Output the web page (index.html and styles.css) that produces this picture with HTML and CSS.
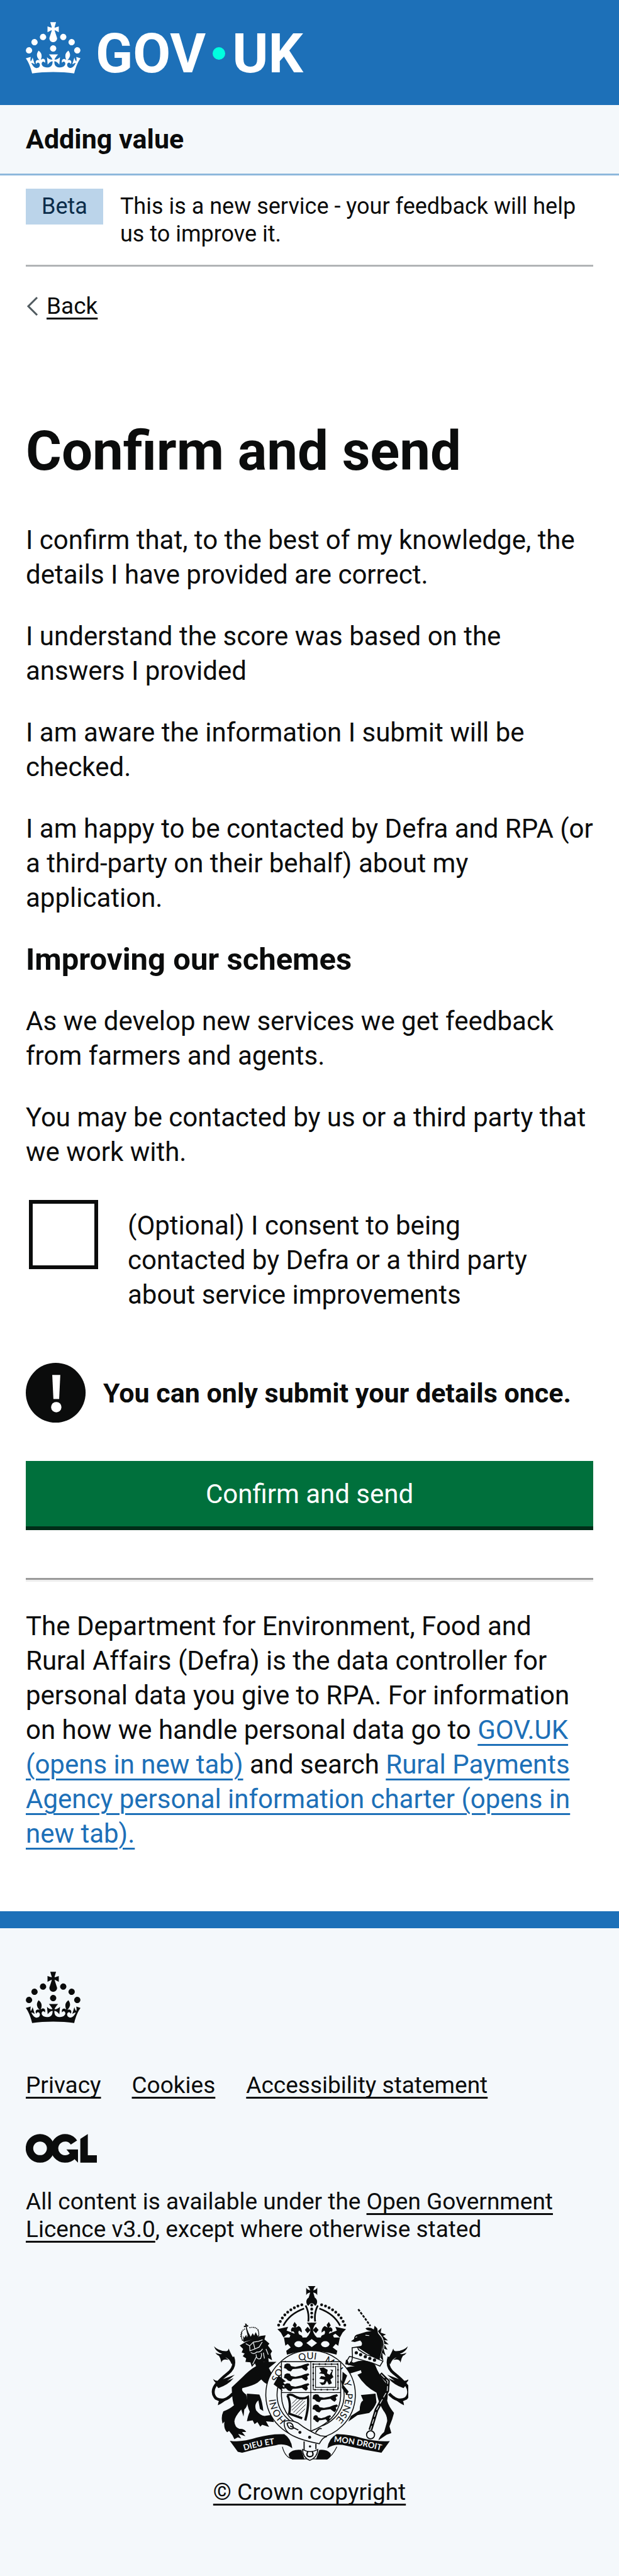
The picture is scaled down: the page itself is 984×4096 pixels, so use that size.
FILE: index.html
```html
<!DOCTYPE html>
<html lang="en">
<head>
<meta charset="utf-8">
<title>Confirm and send - Adding value</title>
<meta name="viewport" content="width=device-width, initial-scale=1">
<link rel="stylesheet" href="styles.css">
</head>
<body>
<svg class="defs" aria-hidden="true">
  <symbol id="crown" viewBox="0 0 32 30">
    <path fill-rule="evenodd" d="M22.6 10.4c-1 .4-2-.1-2.4-1-.4-.9.1-2 1-2.4.9-.4 2 .1 2.4 1s-.1 2-1 2.4m-5.9 6.7c-.9.4-2-.1-2.4-1-.4-.9.1-2 1-2.4.9-.4 2 .1 2.4 1s-.1 2-1 2.4m10.8-3.7c-1 .4-2-.1-2.4-1-.4-.9.1-2 1-2.4.9-.4 2 .1 2.4 1s0 2-1 2.4m3.3 4.8c-1 .4-2-.1-2.4-1-.4-.9.1-2 1-2.4.9-.4 2 .1 2.4 1s-.1 2-1 2.4M17 4.7l2.3 1.2V2.5l-2.3.7-.2-.2.9-3h-3.4l.9 3-.2.2c-.1.1-2.3-.7-2.3-.7v3.4L15 4.7c.1.1.1.2.2.2l-1.3 4c-.1.2-.1.4-.1.6 0 1.1.8 2 1.9 2.2h.7c1-.2 1.9-1.1 1.9-2.1 0-.2 0-.4-.1-.6l-1.3-4c-.1-.2 0-.2.1-.3m-7.6 5.7c.9.4 2-.1 2.4-1 .4-.9-.1-2-1-2.4-.9-.4-2 .1-2.4 1s0 2 1 2.4m-5 3c.9.4 2-.1 2.4-1 .4-.9-.1-2-1-2.4-.9-.4-2 .1-2.4 1s.1 2 1 2.4m-3.2 4.8c.9.4 2-.1 2.4-1 .4-.9-.1-2-1-2.4-.9-.4-2 .1-2.4 1s0 2 1 2.4m14.8 11c4.4 0 8.6.3 12.3.8 1.1-4.5 2.4-7 3.7-8.8l-2.5-.9c.2 1.3.3 1.9 0 2.7-.4-.4-.8-1.1-1.1-2.3l-1.2 4c.7-.5 1.3-.8 2-.9-1.1 2.5-2.6 3.1-3.5 3-1.1-.2-1.7-1.2-1.5-2.1.3-1.2 1.5-1.5 2.1-.1 1.1-2.3-.8-3-2-2.3 1.9-1.9 2.1-3.5.6-5.6-2.1 1.6-2.1 3.2-1.2 5.5-1.2-1.4-3.2-.6-2.5 1.6.9-1.4 2.1-.5 1.9.8-.2 1.1-1.7 2.1-3.5 1.9-2.7-.2-2.9-2.1-2.9-3.6.7-.1 1.9.5 2.9 1.9l.4-4.3c-1.1 1.1-2.1 1.4-3.2 1.4.4-1.2 2.1-3 2.1-3h-5.4s1.7 1.9 2.1 3c-1.1 0-2.1-.2-3.2-1.4l.4 4.3c1-1.4 2.2-2 2.9-1.9-.1 1.5-.2 3.4-2.9 3.6-1.9.2-3.4-.8-3.5-1.9-.2-1.3 1-2.2 1.9-.8.7-2.3-1.2-3-2.5-1.6.9-2.2.9-3.9-1.2-5.5-1.5 2-1.3 3.7.6 5.6-1.2-.7-3.1 0-2 2.3.6-1.4 1.8-1.1 2.1.1.2.9-.3 1.9-1.5 2.1-.9.2-2.4-.5-3.5-3 .6 0 1.2.3 2 .9l-1.2-4c-.3 1.1-.7 1.9-1.1 2.3-.3-.8-.2-1.4 0-2.7l-2.9.9C1.3 23 2.6 25.5 3.7 30c3.7-.5 7.9-.8 12.3-.8"/>
  </symbol>
</svg>

<header class="header">
  <a class="brand" href="#" aria-label="GOV.UK">
    <svg class="crown" aria-hidden="true"><use href="#crown"/></svg>
    <span class="wordmark">GOV<span class="dot"></span>UK</span>
  </a>
</header>
<div class="service">
  <a class="service-name" href="#">Adding value</a>
</div>

<div class="container">
  <div class="phase">
    <strong class="tag">Beta</strong>
    <span class="phase-text">This is a new service - your feedback will help us to improve it.</span>
  </div>
  <a class="back" href="#">
    <svg class="chevron" viewBox="0 0 20 32" aria-hidden="true"><path d="M18 2 4 16l14 14"/></svg>
    <span class="back-text">Back</span>
  </a>

  <main class="main">
    <h1>Confirm and send</h1>
    <p>I confirm that, to the best of my knowledge, the details I have provided are correct.</p>
    <p>I understand the score was based on the answers I provided</p>
    <p>I am aware the information I submit will be checked.</p>
    <p>I am happy to be contacted by Defra and RPA (or a third-party on their behalf) about my application.</p>
    <h2>Improving our schemes</h2>
    <p>As we develop new services we get feedback from farmers and agents.</p>
    <p>You may be contacted by us or a third party that we work with.</p>
    <form class="form">
      <div class="consent">
        <input type="checkbox" id="consent" class="consent-box">
        <label for="consent" class="consent-label">(Optional) I consent to being contacted by Defra or a third party about service improvements</label>
      </div>
      <div class="warning">
        <svg class="warning-icon" viewBox="0 0 105 105" aria-hidden="true">
          <circle class="ink" cx="52" cy="52" r="52"/>
          <path class="paper" d="M46 21h14l-2 42H48z"/>
          <circle class="paper" cx="53" cy="77" r="9"/>
        </svg>
        <strong>You can only submit your details once.</strong>
      </div>
      <button class="submit" type="button">Confirm and send</button>
    </form>
    <hr>
    <p>The Department for Environment, Food and Rural Affairs (Defra) is the data controller for personal data you give to RPA. For information on how we handle personal data go to <a href="#">GOV.UK (opens in new tab)</a> and search <a href="#">Rural Payments Agency personal information charter (opens in new tab).</a></p>
  </main>
</div>

<footer class="footer">
  <svg class="crown" aria-hidden="true"><use href="#crown"/></svg>
  <nav class="footer-links">
    <a href="#">Privacy</a>
    <a href="#">Cookies</a>
    <a href="#">Accessibility statement</a>
  </nav>
  <svg class="ogl" viewBox="27 42 369 150" role="img" aria-label="Open Government Licence">
    <circle class="ring" cx="101" cy="117" r="55"/>
    <path class="ring" d="M277 87A55 55 0 1 0 270 156"/>
    <path class="ink" d="M238 123h60v68l-17-17-26-31zM310 68l39-25v110h47v38h-86z"/>
  </svg>
  <p class="licence">All content is available under the <a href="#">Open Government Licence v3.0</a>, except where otherwise stated</p>
  <a class="copyright" href="#">
    <svg class="arms" viewBox="84 90 1032 918" aria-hidden="true">
      <defs>
        <path id="garter" d="M604 846A185 186 0 0 1 604 474A185 186 0 0 1 604 846"/>
        <path id="motto-left" d="M256 954Q360 922 470 914"/>
        <path id="motto-right" d="M726 908Q850 920 1000 960"/>
        <g id="passant">
          <path class="ink" d="M6 8 18 2 32 4 40 16 62 20 92 14 112 6 130 2 136 10 124 18 128 30 118 42 106 34 96 26 70 30 48 32 38 44 24 40 14 30 2 26z"/>
          <path class="cut" d="M44 10Q72 2 96 8M54 38 72 42M88 36 100 42"/>
        </g>
        <g id="tail">
          <path class="line" stroke-width="15" d="M196 655Q150 705 108 680Q80 650 104 612Q130 580 168 550Q214 516 196 462"/>
          <path class="ink" d="M97 406Q120 430 160 432Q172 432 174 418Q182 440 206 482L190 500Q178 468 152 462Q118 462 104 440Q124 450 140 446Q106 434 97 406zM120 450Q150 455 174 478Q140 470 136 492Q132 468 120 450zM92 578Q112 596 140 580L206 556Q170 590 130 606Q104 608 92 578zM100 602Q140 600 200 574Q170 610 120 626zM118 716Q116 690 140 684L178 672Q150 700 118 716z"/>
        </g>
        <g id="flank">
          <path class="ink" d="M612 398Q590 392 568 372Q600 350 604 322L588 338 574 320 588 304 604 320 600 306Q596 294 584 282H612zM558 370Q520 374 476 372Q494 366 498 348L486 340 462 360 448 334 430 316 486 304 478 324 500 332 520 340Q516 322 504 330 496 316 510 306L520 308 510 296 520 278 532 294 526 308 542 300Q560 312 558 334L544 324Q536 332 544 344 570 350 558 370z"/>
        </g>
      </defs>

      <!-- supporters -->
      <use href="#tail"/>
      <use href="#tail" transform="matrix(-1 0 0 1 1212 0)"/>
      <path class="ink" d="M318 510Q280 532 245 570L190 622Q192 690 202 716 176 738 146 748 132 778 142 812L152 802Q146 840 166 858L176 850Q195 870 204 894L222 884 240 890 224 866 262 878 244 856 266 856Q256 838 230 840 206 832 204 800 206 776 240 738L252 775 256 738Q276 720 272 690L266 660Q238 640 246 626 300 614 325 598L345 580Q372 612 410 614L452 640 440 612 468 624 452 602 472 600 446 584 470 578Q430 578 405 558L385 520 425 488H380Q345 480 318 510z"/>
      <path class="ink" d="M270 655 335 660Q350 690 356 746L338 735 330 690Q306 710 318 742 340 770 362 772L400 766 412 804 370 800 386 830 350 818 340 828 325 804 310 815 300 795 270 800Q275 770 285 750 265 710 270 655z"/>
      <path class="ink" d="M232 402 262 384 342 352 368 348 362 370 388 392 380 402 402 432 394 446 402 480 382 468 386 500 366 486 350 490 322 520 312 496 296 514 288 490 262 488 266 470 248 458 258 444 242 438 250 420z"/>
      <path class="cut" d="M264 392 284 404 304 384 330 380 352 372M284 404 286 430 312 420 304 388M312 420 334 410 350 384M290 438Q306 452 322 436 340 440 352 420M318 448Q320 480 342 470 350 450 344 442M300 500 320 460M362 470 356 440M382 450 370 420"/>
      <path class="line" stroke-width="4" d="M246 374Q236 350 244 334M332 356Q334 330 326 318M244 376 330 352"/>
      <path class="dots" stroke-width="6" stroke-dasharray="0 9" d="M238 354Q238 322 262 314M286 308Q316 302 330 322"/>
      <path class="ink" d="M250 350 256 362 266 346 270 360 278 334 290 356 300 338 308 350 316 332 326 352 330 362 252 384zM260 286 270 290 268 296 276 294 276 304 268 302 272 318 284 350 274 352 266 318 264 304 254 306 254 298 262 298z"/>
      <path class="ink" d="M832 368Q832 346 858 342L896 330 924 326Q900 324 892 312 914 302 936 318L940 298 954 312 958 338Q990 370 978 428L966 476 930 462 880 430 846 408 870 404Q880 390 864 376L836 384 816 380z"/>
      <path class="ink" d="M958 326 976 310 972 334 1000 344 984 352 1010 376 990 374 1014 396 990 394 1008 424 986 418 998 456 980 440 986 482 970 466 982 420Q984 370 958 326z"/>
      <path class="cut" d="M964 340Q996 372 988 420M892 348 912 350M840 360 848 356"/>
      <path class="line" stroke-width="9" stroke-dasharray="14 6" d="M854 212Q884 250 918 300"/>
      <path class="paper edge" d="M822 414 850 410 856 424 880 440 900 452 930 460 950 470 984 484 968 510 930 494 880 480 824 464z"/>
      <path class="dots" stroke-width="17" stroke-dasharray="0 26" d="M844 440Q890 462 956 484"/>
      <path class="ink" d="M790 476 830 492Q890 466 942 502 962 556 1000 600 1014 650 1006 692 1014 722 1042 756 1034 790 1018 826L1028 862 1004 870 960 900Q966 876 990 856L1006 800Q1008 770 985 742 960 700 950 650 890 620 850 556L872 546 868 532 800 552Q780 600 776 622L806 648 796 664 764 622Q756 560 774 528 800 510 836 512L786 500z"/>
      <path class="ink" d="M868 662 945 655 950 700Q940 730 912 756L850 768 802 802 816 772 862 742Q862 700 880 690z"/>
      <path class="line" stroke-width="20" d="M970 550 1010 590 1006 640 950 740 918 846"/>
      <path class="cut" stroke-width="11" stroke-dasharray="26 12" d="M974 554 1010 590 1006 640 950 740 918 846"/>
      <circle class="line" stroke-width="6" cx="919" cy="871" r="21"/>
      <path class="paper edge" d="M796 480 808 460 824 462 820 484 804 502z"/>

      <!-- garter -->
      <ellipse class="paper edge" cx="604" cy="660" rx="235" ry="232"/>
      <ellipse class="line" stroke-width="5" cx="604" cy="660" rx="176" ry="174"/>
      <text class="motto"><textPath href="#garter" startOffset="140">HONI</textPath></text>
      <text class="motto"><textPath href="#garter" startOffset="356">SOIT</textPath></text>
      <text class="motto"><textPath href="#garter" startOffset="522">QUI</textPath></text>
      <text class="motto"><textPath href="#garter" startOffset="656">MAL</textPath></text>
      <text class="motto"><textPath href="#garter" startOffset="804">Y</textPath></text>
      <text class="motto"><textPath href="#garter" startOffset="866">PENSE</textPath></text>

      <!-- shield -->
      <path class="paper edge" d="M451 487H762V660Q762 790 605 852 451 790 451 660z"/>
      <path class="line" stroke-width="4" d="M605 487V852M451 649H762"/>
      <use href="#passant" x="462" y="494"/>
      <use href="#passant" x="462" y="546"/>
      <use href="#passant" x="462" y="598"/>
      <use href="#passant" x="612" y="656"/>
      <use href="#passant" x="612" y="710"/>
      <use href="#passant" transform="translate(616 766) scale(.7 .9)"/>
      <path class="line" stroke-width="4" d="M618 500H748V634H618zM630 512H736V622H630z"/>
      <path class="dots" stroke-width="9" stroke-dasharray="0 32" d="M618 500H748V634H618V500"/>
      <path class="ink" d="M650 520 672 518 694 530 690 548 704 556 716 536 706 528 722 530 716 552 724 568 708 580 716 600 700 608 690 588 680 606 664 610 650 596 672 596 678 582 650 576 660 562 682 566 674 552 648 548 660 540z"/>
      <path class="line" stroke-width="12" d="M482 664Q500 654 520 668 560 690 590 672 596 720 576 796M482 664Q502 700 492 760L560 784"/>
      <path class="line" stroke-width="3" d="M508 706 534 680M504 726 550 684M506 742 564 688M514 754 574 694M526 762 578 712M540 768 576 734"/>
      <path class="ink" d="M436 560 474 590 460 596 474 612 456 612 470 630 452 628 458 642 410 606z"/>
      <path class="ink" d="M772 540 796 560 776 610 804 644 794 662 768 624z"/>

      <!-- buckle and strap -->
      <path class="paper edge" d="M466 800Q500 790 540 810 590 850 656 876L690 880Q668 882 650 918 560 900 520 880 460 856 466 800z"/>
      <path class="line" stroke-width="6" d="M480 810Q510 800 514 836 490 850 480 810M496 824 540 846M570 906V950M632 918V946M630 860Q650 830 662 840"/>
      <circle class="ink" cx="548" cy="858" r="8"/><circle class="ink" cx="599" cy="884" r="8"/><circle class="ink" cx="601" cy="932" r="6"/>

      <!-- ribbon -->
      <path class="ink" d="M180 902Q240 912 320 886 400 864 466 868 502 890 508 942 470 912 420 926 340 938 245 965L222 960zM1020 904Q950 908 880 890 800 866 740 868 700 890 692 942 730 914 790 928 880 950 976 965z"/>
      <path class="line" stroke-width="4" d="M456 934Q470 990 510 998H690Q720 980 742 934"/>
      <path class="ink" d="M490 970Q510 945 556 950L572 1000H508Q486 990 490 970zM710 970Q690 945 650 950L632 1000H692Q712 990 710 970z"/>
      <path class="paper edge" d="M562 948Q602 970 642 948 640 990 600 1005 562 990 562 948z"/>
      <path class="line" stroke-width="7" d="M590 958Q576 984 600 986 626 984 612 958"/>
      <text class="scroll"><textPath href="#motto-left">DIEU ET</textPath></text>
      <text class="scroll"><textPath href="#motto-right">MON DROIT</textPath></text>

      <!-- royal crown -->
      <path class="ink" d="M464 360H758L740 450Q604 410 480 450z"/>
      <use href="#flank"/>
      <use href="#flank" transform="matrix(-1 0 0 1 1220 0)"/>
      <path class="paper" d="M610 368 638 389 610 410 582 389zM462 410 484 394 500 412 476 430zM758 410 736 394 720 412 744 430z"/>
      <ellipse class="paper" cx="541" cy="395" rx="22" ry="16"/>
      <ellipse class="paper" cx="681" cy="395" rx="22" ry="16"/>
      <path class="dots" stroke-width="15" stroke-dasharray="0 21" d="M558 188Q466 216 436 296M662 188Q754 216 784 296M610 190V272"/>
      <path class="line" stroke-width="9" d="M570 208Q492 236 461 298M650 208Q728 236 759 298M578 192Q598 230 592 276M642 192Q622 230 628 276"/>
      <path class="ink" d="M590 90H630Q620 100 618 112 632 110 639 98V138Q632 126 618 124L626 150A27 27 0 0 1 628 194Q610 166 592 194A27 27 0 0 1 594 150L602 124Q588 126 581 138V98Q588 110 602 112 600 100 590 90z"/>
    </svg>
    <span class="copyright-text">© Crown copyright</span>
  </a>
</footer>
</body>
</html>
```
FILE: styles.css
```css
:root {
  --ink: #0b0c0c;
  --blue: #1d70b8;
  --pale: #f4f8fb;
  --gutter: 41px;
}

* {
  box-sizing: border-box;
}

body {
  margin: 0;
  background: #fff;
  color: var(--ink);
  font: 42px/55px Roboto, "Liberation Sans", sans-serif;
}

a {
  color: var(--blue);
  text-decoration-thickness: 3px;
  text-underline-offset: 8px;
}

.defs {
  display: none;
}

.crown {
  display: block;
  flex: none;
  width: 87px;
  height: 82px;
  fill: currentColor;
}

.header {
  padding: 35px var(--gutter) 32px;
  background: var(--blue);
}

.brand {
  display: flex;
  align-items: flex-start;
  gap: 24px;
  color: #fff;
  text-decoration: none;
}

.wordmark {
  display: flex;
  align-items: center;
  font-weight: 700;
  font-size: 87px;
  line-height: 100px;
}

.dot {
  width: 20px;
  height: 20px;
  margin: 0 11px;
  border-radius: 50%;
  background: #00ffe0;
}

.service {
  padding: 27px var(--gutter);
  background: var(--pale);
  border-bottom: 3px solid #8eb8dc;
}

.service-name {
  color: var(--ink);
  font-size: 43px;
  font-weight: 700;
  text-decoration: none;
}

.container {
  padding: 0 var(--gutter);
}

.phase {
  display: flex;
  align-items: flex-start;
  gap: 27px;
  padding: 21px 0 21px;
  border-bottom: 3px solid #b1b4b6;
  font-size: 36px;
  line-height: 44px;
}

.tag {
  padding: 6px 25px 7px;
  background: #bbd4ea;
  color: #0c2d4a;
  font-weight: 400;
}

.phase-text {
  padding: 6px 0;
}

.back {
  display: flex;
  align-items: center;
  gap: 13px;
  width: fit-content;
  margin-top: 41px;
  color: var(--ink);
  font-size: 37px;
  line-height: 44px;
  text-decoration: none;
}

.back-text {
  text-decoration: underline 3px;
  text-underline-offset: 6px;
  text-decoration-skip-ink: none;
}

.chevron {
  width: 20px;
  height: 32px;
  fill: none;
  stroke: #505a5f;
  stroke-width: 3;
}

.main {
  padding: 160px 0 96px;
}

h1 {
  margin: 0 0 66px;
  font-size: 87px;
  line-height: 96px;
}

h2 {
  margin: 0 0 43px;
  font-size: 49px;
  line-height: 55px;
}

p {
  margin: 0 0 43px;
}

.main > p:last-child {
  margin: 0;
}

.consent {
  display: flex;
  align-items: flex-start;
  gap: 47px;
  padding: 6px 5px 0;
}

.consent-box {
  appearance: none;
  flex: none;
  width: 110px;
  height: 110px;
  margin: 0;
  border: 6px solid var(--ink);
  background: #fff;
}

.consent-label {
  max-width: 670px;
  padding-top: 13px;
}

.warning {
  display: flex;
  align-items: center;
  gap: 27px;
  margin: 81px 0 60px;
  font-size: 43px;
}

.warning-icon {
  flex: none;
  width: 96px;
  height: 96px;
}

.ink {
  fill: var(--ink);
}

.paper {
  fill: #fff;
}

.submit {
  display: block;
  width: 100%;
  height: 104px;
  padding: 0;
  border: 0;
  background: #00703c;
  box-shadow: 0 6px 0 #002d18;
  color: #fff;
  font: inherit;
}

hr {
  margin: 82px 0 43px;
  border: 0;
  border-top: 3px solid #9a9a9a;
  border-bottom: 3px solid #eee;
}

.footer {
  padding: 69px var(--gutter) 111px;
  border-top: 27px solid var(--blue);
  background: var(--pale);
  font-size: 37px;
  line-height: 44px;
}

.footer a {
  color: var(--ink);
  text-underline-offset: 6px;
  text-decoration-skip-ink: none;
}

.footer-links {
  display: flex;
  flex-wrap: wrap;
  gap: 0 49px;
  margin: 77px 0 55px;
}

.ogl {
  display: block;
  width: 113px;
  height: 46px;
}

.ring {
  fill: none;
  stroke: var(--ink);
  stroke-width: 39;
}

.licence {
  margin: 40px 0 68px;
}

.copyright {
  display: flex;
  flex-direction: column;
  align-items: center;
  gap: 28px;
}

.arms {
  width: 313px;
  height: 278px;
}

.arms .paper {
  fill: var(--pale);
}

.arms .edge {
  stroke: var(--ink);
  stroke-width: 5;
}

.arms .line {
  fill: none;
  stroke: var(--ink);
}

.arms .cut {
  fill: none;
  stroke: var(--pale);
  stroke-width: 4;
}

.arms .dots {
  fill: none;
  stroke: var(--ink);
  stroke-linecap: round;
}

.motto {
  fill: var(--ink);
  font: 50px Lato, sans-serif;
}

.scroll {
  fill: var(--pale);
  font: 700 43px Lato, sans-serif;
}
```
